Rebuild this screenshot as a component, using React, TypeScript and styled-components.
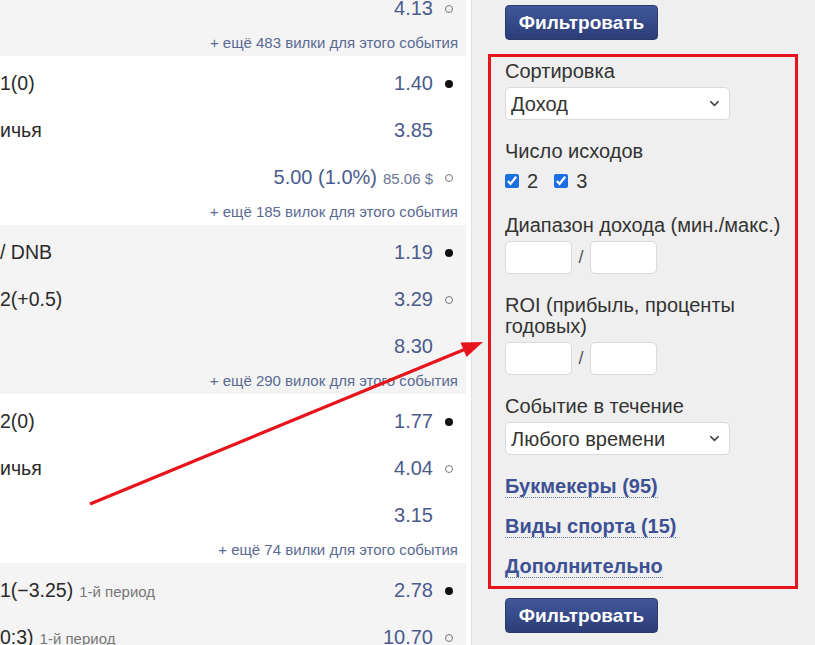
import styled, { createGlobalStyle } from "styled-components";
import { ChevronDown } from "lucide-react";

type Row = {
  label?: string;
  note?: string;
  odds: string;
  extra?: string;
  dot?: "full" | "empty";
};

type EventItem = {
  rows: Row[];
  more?: string;
  clipped?: boolean;
};

const events: EventItem[] = [
  {
    clipped: true,
    rows: [{ odds: "4.13", dot: "empty" }],
    more: "+ ещё 483 вилки для этого события",
  },
  {
    rows: [
      { label: "1(0)", odds: "1.40", dot: "full" },
      { label: "ичья", odds: "3.85" },
      { odds: "5.00 (1.0%)", extra: "85.06 $", dot: "empty" },
    ],
    more: "+ ещё 185 вилок для этого события",
  },
  {
    rows: [
      { label: "/ DNB", odds: "1.19", dot: "full" },
      { label: "2(+0.5)", odds: "3.29", dot: "empty" },
      { odds: "8.30" },
    ],
    more: "+ ещё 290 вилок для этого события",
  },
  {
    rows: [
      { label: "2(0)", odds: "1.77", dot: "full" },
      { label: "ичья", odds: "4.04", dot: "empty" },
      { odds: "3.15" },
    ],
    more: "+ ещё 74 вилки для этого события",
  },
  {
    rows: [
      { label: "1(−3.25)", note: "1-й период", odds: "2.78", dot: "full" },
      { label: "0:3)", note: "1-й период", odds: "10.70", dot: "empty" },
    ],
  },
];

const GlobalStyle = createGlobalStyle`
  html, body {
    margin: 0;
    padding: 0;
    background: #fff;
    overflow: hidden;
  }
  body {
    font-family: "Liberation Sans", Arial, sans-serif;
  }
`;

function FilterButton() {
  return <Button type="button">Фильтровать</Button>;
}

function Select({ value }: { value: string }) {
  return (
    <SelectWrap>
      <SelectBox defaultValue={value}>
        <option>{value}</option>
      </SelectBox>
      <Chevron>
        <ChevronDown size={15} strokeWidth={2.4} />
      </Chevron>
    </SelectWrap>
  );
}

function RangeInputs() {
  return (
    <Range>
      <NumInput type="text" />
      <Slash>/</Slash>
      <NumInput type="text" />
    </Range>
  );
}

export default function App() {
  return (
    <>
      <GlobalStyle />
      <Page>
        <List>
          {events.map((ev, i) => (
            <Block key={i} $gray={i % 2 === 0} $clipped={ev.clipped}>
              {ev.rows.map((r, j) => (
                <OddsRow key={j}>
                  <Label>
                    {r.label}
                    {r.note && <Note>{r.note}</Note>}
                  </Label>
                  <Odds>
                    {r.odds}
                    {r.extra && <Extra>{r.extra}</Extra>}
                  </Odds>
                  <DotSlot>{r.dot && <Dot $filled={r.dot === "full"} />}</DotSlot>
                </OddsRow>
              ))}
              {ev.more && <More>{ev.more}</More>}
            </Block>
          ))}
        </List>

        <Sidebar>
          <FilterButton />
          <Form>
            <Field>
              <FieldLabel>Сортировка</FieldLabel>
              <Select value="Доход" />
            </Field>
            <Field>
              <FieldLabel>Число исходов</FieldLabel>
              <Checks>
                <Check>
                  <input type="checkbox" defaultChecked />2
                </Check>
                <Check>
                  <input type="checkbox" defaultChecked />3
                </Check>
              </Checks>
            </Field>
            <Field>
              <FieldLabel>Диапазон дохода (мин./макс.)</FieldLabel>
              <RangeInputs />
            </Field>
            <Field>
              <FieldLabel>
                ROI (прибыль, проценты
                <br />
                годовых)
              </FieldLabel>
              <RangeInputs />
            </Field>
            <Field>
              <FieldLabel>Событие в течение</FieldLabel>
              <Select value="Любого времени" />
            </Field>
            <Links>
              <DottedLink>Букмекеры (95)</DottedLink>
              <DottedLink>Виды спорта (15)</DottedLink>
              <DottedLink>Дополнительно</DottedLink>
            </Links>
          </Form>
          <FilterButton />
        </Sidebar>

        <Arrow width="815" height="645" viewBox="0 0 815 645">
          <line x1="90" y1="504" x2="468" y2="348" stroke="#e8141c" strokeWidth="3.2" />
          <polygon points="483,342 466.5,357 460.5,342.5" fill="#e8141c" />
        </Arrow>
      </Page>
    </>
  );
}

const Page = styled.div`
  position: relative;
  display: flex;
  height: 645px;
  overflow: hidden;
`;

const List = styled.div`
  width: 466px;
  padding-right: 5px;
  border-right: 1px solid #e0e0e0;
  background: #fff;
  flex-shrink: 0;
`;

const Block = styled.div<{ $gray: boolean; $clipped?: boolean }>`
  background: ${(p) => (p.$gray ? "#f4f4f4" : "#fff")};
  padding: 4px 0 3px;
  margin-top: ${(p) => (p.$clipped ? "-19px" : "0")};
`;

const OddsRow = styled.div`
  display: flex;
  align-items: center;
  height: 47px;
  font-size: 19.5px;
`;

const Label = styled.div`
  flex: 1;
  color: #2a2a2a;
  white-space: nowrap;
`;

const Note = styled.span`
  margin-left: 6px;
  font-size: 15px;
  color: #777;
`;

const Odds = styled.div`
  color: #4b5b8e;
  white-space: nowrap;
  font-size: 20px;
`;

const Extra = styled.span`
  margin-left: 6px;
  font-size: 15px;
  color: #6b7494;
`;

const DotSlot = styled.div`
  width: 25px;
  display: flex;
  justify-content: flex-end;
  padding-right: 5px;
  box-sizing: border-box;
  margin-right: 8px;
`;

const Dot = styled.span<{ $filled: boolean }>`
  width: 8px;
  height: 8px;
  border-radius: 50%;
  box-sizing: border-box;
  background: ${(p) => (p.$filled ? "#111" : "transparent")};
  border: ${(p) => (p.$filled ? "none" : "1px solid #777")};
`;

const More = styled.div`
  margin-top: 1px;
  height: 20px;
  line-height: 20px;
  text-align: right;
  padding-right: 8px;
  font-size: 15px;
  color: #5a6a93;
`;

const Sidebar = styled.div`
  flex: 1;
  background: #efefef;
  padding: 5px 17px 0 16px;
  display: flex;
  flex-direction: column;
  align-items: flex-start;
`;

const Button = styled.button`
  width: 153px;
  height: 35px;
  margin-left: 17px;
  border: 1px solid #2b3a6d;
  border-radius: 4px;
  background: linear-gradient(#41579a, #2c3d77);
  color: #fff;
  font-family: "Liberation Sans", Arial, sans-serif;
  font-size: 19px;
  font-weight: bold;
  cursor: pointer;
`;

const Form = styled.div`
  align-self: stretch;
  margin: 14px 0 9px;
  border: 3px solid #e8141c;
  padding: 4px 14px 8px;
  display: flex;
  flex-direction: column;
  gap: 21px;
`;

const Field = styled.div`
  display: flex;
  flex-direction: column;
  gap: 5px;
`;

const FieldLabel = styled.div`
  font-size: 20px;
  line-height: 21px;
  color: #333;
`;

const SelectWrap = styled.div`
  position: relative;
  width: 225px;
`;

const SelectBox = styled.select`
  appearance: none;
  width: 100%;
  height: 33px;
  padding: 0 5px;
  border: 1px solid #dadada;
  border-radius: 5px;
  background: #fff;
  color: #333;
  font-family: "Liberation Sans", Arial, sans-serif;
  font-size: 20px;
`;

const Chevron = styled.span`
  position: absolute;
  right: 8px;
  top: 9px;
  color: #444;
  pointer-events: none;
  display: flex;
`;

const Checks = styled.div`
  display: flex;
  align-items: center;
  gap: 16px;
  height: 22px;
  margin-top: 3px;
  padding-bottom: 2px;
`;

const Check = styled.label`
  display: flex;
  align-items: center;
  gap: 8px;
  font-size: 20px;
  color: #333;

  input {
    width: 14px;
    height: 14px;
    margin: 0;
    accent-color: #1b6fe3;
  }
`;

const Range = styled.div`
  display: flex;
  align-items: center;
`;

const NumInput = styled.input`
  width: 67px;
  height: 33px;
  box-sizing: border-box;
  border: 1px solid #dadada;
  border-radius: 5px;
  background: #fff;
`;

const Slash = styled.span`
  width: 18px;
  text-align: center;
  font-size: 18px;
  color: #555;
`;

const Links = styled.div`
  display: flex;
  flex-direction: column;
  align-items: flex-start;
  gap: 18px;
`;

const DottedLink = styled.a`
  font-size: 20px;
  line-height: 21px;
  font-weight: bold;
  color: #3e5195;
  text-decoration: none;
  border-bottom: 1px dotted #6474ac;
  cursor: pointer;
`;

const Arrow = styled.svg`
  position: absolute;
  left: 0;
  top: 0;
  pointer-events: none;
`;
